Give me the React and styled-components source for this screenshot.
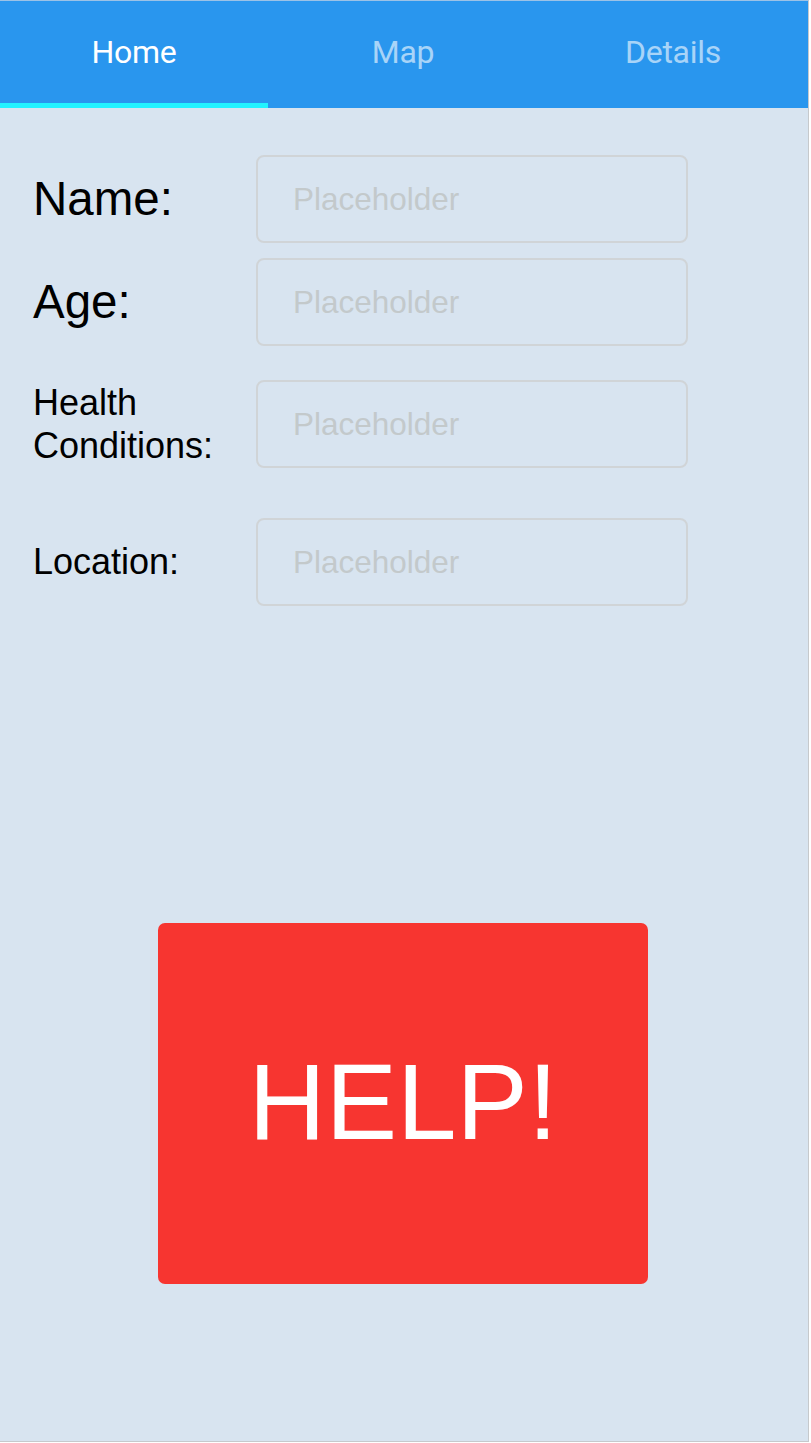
import React, { useState } from 'react';
import styled, { createGlobalStyle } from 'styled-components';

const GlobalStyle = createGlobalStyle`
    html, body {
        margin: 0;
        padding: 0;
        background: #ffffff;
    }
    * {
        box-sizing: border-box;
    }
`;

const Frame = styled.div`
    width: 809px;
    height: 1442px;
    background: #d8e4f0;
    border-top: 1px solid #9cc2e6;
    border-right: 1px solid #c6c9cc;
    border-bottom: 1px solid #c6c9cc;
    display: flex;
    flex-direction: column;
    font-family: "Liberation Sans", Arial, sans-serif;
`;

const TabBar = styled.nav`
    display: grid;
    grid-template-columns: 268px 1fr 1fr;
    height: 107px;
    background: #2996ee;
`;

const Tab = styled.div`
    display: flex;
    align-items: center;
    justify-content: center;
    font-family: Roboto, "Noto Sans", sans-serif;
    font-size: 32px;
    letter-spacing: -0.3px;
    color: ${(p) => (p.active ? '#ffffff' : 'rgba(255, 255, 255, 0.6)')};
    border-bottom: 5px solid ${(p) => (p.active ? '#22f3ff' : 'transparent')};
    cursor: pointer;
`;

const Form = styled.div`
    display: flex;
    flex-direction: column;
    padding: 47px 0 0 33px;
`;

const Row = styled.div`
    display: grid;
    grid-template-columns: 223px 432px;
    align-items: center;
    margin-top: ${(p) => p.gap || 0}px;
`;

const Label = styled.label`
    color: #000000;
    font-size: ${(p) => (p.big ? '47.5px' : '36px')};
    line-height: ${(p) => (p.big ? '1.15' : '1.2')};
`;

const Input = styled.input`
    height: 88px;
    width: 432px;
    border: 2px solid #d0d4d7;
    border-radius: 8px;
    background: transparent;
    padding: 0 0 0 35px;
    font-family: "Liberation Sans", Arial, sans-serif;
    font-size: 31.5px;
    color: #333;
    outline: none;
    &::placeholder {
        color: #c3c9cb;
    }
`;

const HelpArea = styled.div`
    display: flex;
    justify-content: center;
    padding: 317px 2px 0 0;
`;

const HelpButton = styled.button`
    width: 490px;
    height: 361px;
    border: none;
    border-radius: 7px;
    background: #f73530;
    color: #ffffff;
    font-family: "Liberation Sans", Arial, sans-serif;
    font-size: 107px;
    padding: 0 0 4px 0;
    cursor: pointer;
`;

const fields = [
    { label: 'Name:', big: true, gap: 0 },
    { label: 'Age:', big: true, gap: 15 },
    { label: <>Health<br />Conditions:</>, gap: 34 },
    { label: 'Location:', gap: 50 },
];

const App = () => {
    const [tab, setTab] = useState('Home');

    return (
        <>
            <GlobalStyle />
            <Frame>
                <TabBar>
                    {['Home', 'Map', 'Details'].map((t) => (
                        <Tab key={t} active={tab === t} onClick={() => setTab(t)}>
                            {t}
                        </Tab>
                    ))}
                </TabBar>
                <Form>
                    {fields.map((f, i) => (
                        <Row key={i} gap={f.gap}>
                            <Label big={f.big}>{f.label}</Label>
                            <Input placeholder="Placeholder" />
                        </Row>
                    ))}
                </Form>
                <HelpArea>
                    <HelpButton>HELP!</HelpButton>
                </HelpArea>
            </Frame>
        </>
    );
};

export default App;
